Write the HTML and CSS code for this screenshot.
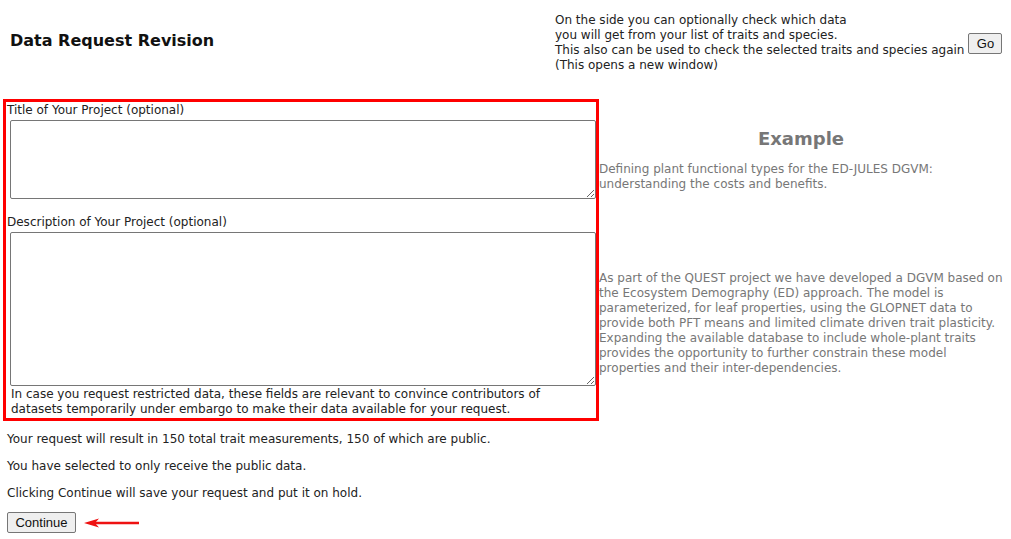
FILE: index.html
```html
<!DOCTYPE html>
<html>
<head>
<meta charset="utf-8">
<link rel="stylesheet" href="styles.css">
</head>
<body>
<div class="top">
  <h1 class="title">Data Request Revision</h1>
  <div class="check">
    <div class="check-text">On the side you can optionally check which data<br>you will get from your list of traits and species.<br>This also can be used to check the selected traits and species again<br>(This opens a new window)</div>
    <button class="btn go">Go</button>
  </div>
</div>
<div class="main">
  <div class="formbox">
    <div class="label">Title of Your Project (optional)</div>
    <textarea class="ta ta-title"></textarea>
    <div class="label label-desc">Description of Your Project (optional)</div>
    <textarea class="ta ta-desc"></textarea>
    <div class="note">In case you request restricted data, these fields are relevant to convince contributors of datasets temporarily under embargo to make their data available for your request.</div>
  </div>
  <div class="example">
    <div class="ex1">
      <h2 class="ex-head">Example</h2>
      <div class="ex-text">Defining plant functional types for the ED-JULES DGVM:<br>understanding the costs and benefits.</div>
    </div>
    <div class="ex2">
      <div class="ex-text">As part of the QUEST project we have developed a DGVM based on the Ecosystem Demography (ED) approach. The model is parameterized, for leaf properties, using the GLOPNET data to provide both PFT means and limited climate driven trait plasticity. Expanding the available database to include whole-plant traits provides the opportunity to further constrain these model properties and their inter-dependencies.</div>
    </div>
  </div>
</div>
<div class="info">
  <p>Your request will result in 150 total trait measurements, 150 of which are public.</p>
  <p>You have selected to only receive the public data.</p>
  <p>Clicking Continue will save your request and put it on hold.</p>
  <div class="actions">
    <button class="btn cont">Continue</button>
    <svg class="arrow" width="56" height="12" viewBox="0 0 56 12"><line x1="6" y1="6" x2="55" y2="6" stroke="#ee1111" stroke-width="2.5"/><path d="M0 6 L15 1.5 L11 6 L15 10.5 Z" fill="#ee1111"/></svg>
  </div>
</div>
</body>
</html>
```
FILE: styles.css
```css
html, body { margin: 0; padding: 0; background: #fff; }
body {
  font-family: "DejaVu Sans", Verdana, sans-serif;
  font-size: 12px;
  line-height: 15px;
  color: #222;
  width: 1011px;
}
.top {
  display: flex;
  height: 99px;
}
.title {
  margin: 0;
  width: 555px;
  flex: none;
  padding: 32px 0 0 10px;
  box-sizing: border-box;
  font-size: 16px;
  line-height: 18px;
  font-weight: bold;
  color: #111;
}
.check {
  display: flex;
  align-items: center;
  gap: 4px;
  height: 60px;
  margin-top: 13px;
  align-self: flex-start;
}
.check-text { white-space: nowrap; }
.btn {
  font-family: "Liberation Sans", Arial, sans-serif;
  font-size: 13px;
  background: #efefef;
  border: 1px solid #767676;
  border-radius: 2px;
  color: #111;
  padding: 0;
  height: 21px;
  box-sizing: border-box;
}
.go { width: 34px; margin-top: 0; }
.main {
  display: flex;
  margin-left: 3px;
  height: 322px;
}
.formbox {
  width: 596px;
  flex: none;
  box-sizing: border-box;
  border: 3px solid #ff0000;
  padding: 0;
  display: flex;
  flex-direction: column;
}
.label { padding: 1px 0 0 1px; height: 15px; }
.ta {
  display: block;
  margin: 2px 0 0 4px;
  width: 586px;
  box-sizing: border-box;
  border: 1px solid #767676;
  border-radius: 2px;
  resize: both;
  font-family: inherit;
}
.ta-title { height: 79px; }
.label-desc { margin-top: 15px; }
.ta-desc { height: 154px; }
.note { padding: 1px 30px 0 5px; margin-top: 0; }
.example {
  width: 404px;
  color: #777;
  display: flex;
  flex-direction: column;
}
.ex1 { height: 111px; padding-top: 29px; box-sizing: border-box; }
.ex-head {
  margin: 0 0 12px;
  text-align: center;
  font-size: 18px;
  line-height: 22px;
  font-weight: bold;
  color: #777;
}
.ex2 { padding-top: 61px; }
.info { padding-left: 7px; }
.info p { margin: 0; padding-top: 11px; height: 16px; }
.actions {
  display: flex;
  align-items: center;
  gap: 8px;
  margin-top: 10px;
}
.cont { width: 69px; }
.arrow { display: block; }
```
